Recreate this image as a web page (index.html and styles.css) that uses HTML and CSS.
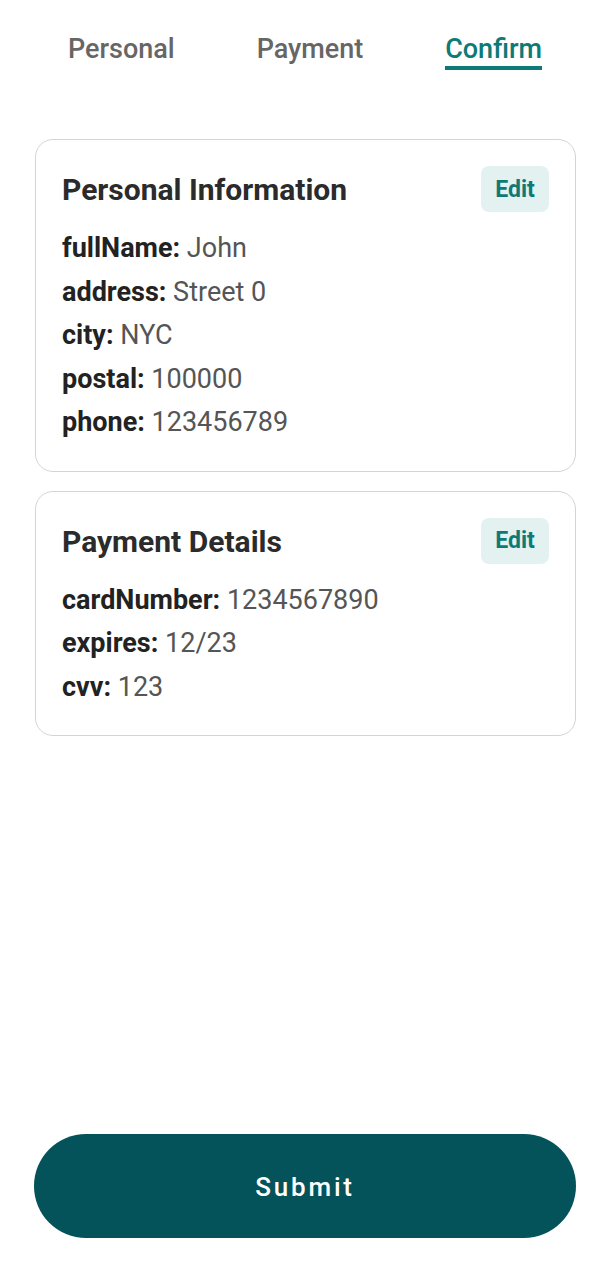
FILE: index.html
```html
<!DOCTYPE html>
<html lang="en">
<head>
<meta charset="utf-8">
<title>Confirm</title>
<link rel="stylesheet" href="styles.css">
</head>
<body>
<div class="app">
  <nav class="tabs">
    <div class="tab">Personal</div>
    <div class="tab">Payment</div>
    <div class="tab active">Confirm</div>
  </nav>

  <section class="card">
    <div class="card-head">
      <h2 class="card-title">Personal Information</h2>
      <button class="edit">Edit</button>
    </div>
    <div class="row"><b>fullName:</b> John</div>
    <div class="row"><b>address:</b> Street 0</div>
    <div class="row"><b>city:</b> NYC</div>
    <div class="row"><b>postal:</b> 100000</div>
    <div class="row"><b>phone:</b> 123456789</div>
  </section>

  <section class="card">
    <div class="card-head">
      <h2 class="card-title">Payment Details</h2>
      <button class="edit">Edit</button>
    </div>
    <div class="row"><b>cardNumber:</b> 1234567890</div>
    <div class="row"><b>expires:</b> 12/23</div>
    <div class="row"><b>cvv:</b> 123</div>
  </section>

  <button class="submit">Submit</button>
</div>
</body>
</html>
```

FILE: styles.css
```css
* { box-sizing: border-box; }
html, body { margin: 0; padding: 0; background: #fff; }
body { font-family: Roboto, "Noto Sans", Arial, sans-serif; }

.app {
  min-height: 1280px;
  display: flex;
  flex-direction: column;
  padding: 0 34px 42px 35px;
}

.tabs {
  display: flex;
  justify-content: space-between;
  padding: 33px 34px 0 33px;
  margin-bottom: 69px;
}
.tab {
  font-size: 27px;
  font-weight: 500;
  color: #666;
  line-height: 32px;
  padding-bottom: 1px;
  border-bottom: 4px solid transparent;
}
.tab.active {
  color: #0e7a76;
  border-bottom-color: #0e7a76;
}

.card {
  border: 1.5px solid #d4d4d4;
  border-radius: 18px;
  padding: 26px 26px 26px 26px;
  margin-bottom: 19px;
}
.card-head {
  display: flex;
  justify-content: space-between;
  align-items: center;
  margin-bottom: 15px;
}
.card-title {
  margin: 0;
  font-size: 30px;
  line-height: 36px;
  font-weight: 700;
  color: #2b2b2b;
  padding-top: 2px;
}
.edit {
  font-family: inherit;
  border: none;
  background: #e4f1f1;
  color: #0e7a76;
  font-size: 23px;
  font-weight: 700;
  width: 68px;
  height: 46px;
  border-radius: 8px;
  padding: 0;
}
.row {
  font-size: 27px;
  line-height: 43.5px;
  color: #555;
}
.row b {
  color: #222;
  font-weight: 700;
}

.submit {
  margin-top: auto;
  height: 104px;
  width: 542px;
  margin-left: -1px;
  border: none;
  border-radius: 52px;
  background: #04525a;
  color: #fff;
  font-family: inherit;
  font-size: 26px;
  font-weight: 500;
  letter-spacing: 2.8px;
  padding-top: 3px;
}
```
